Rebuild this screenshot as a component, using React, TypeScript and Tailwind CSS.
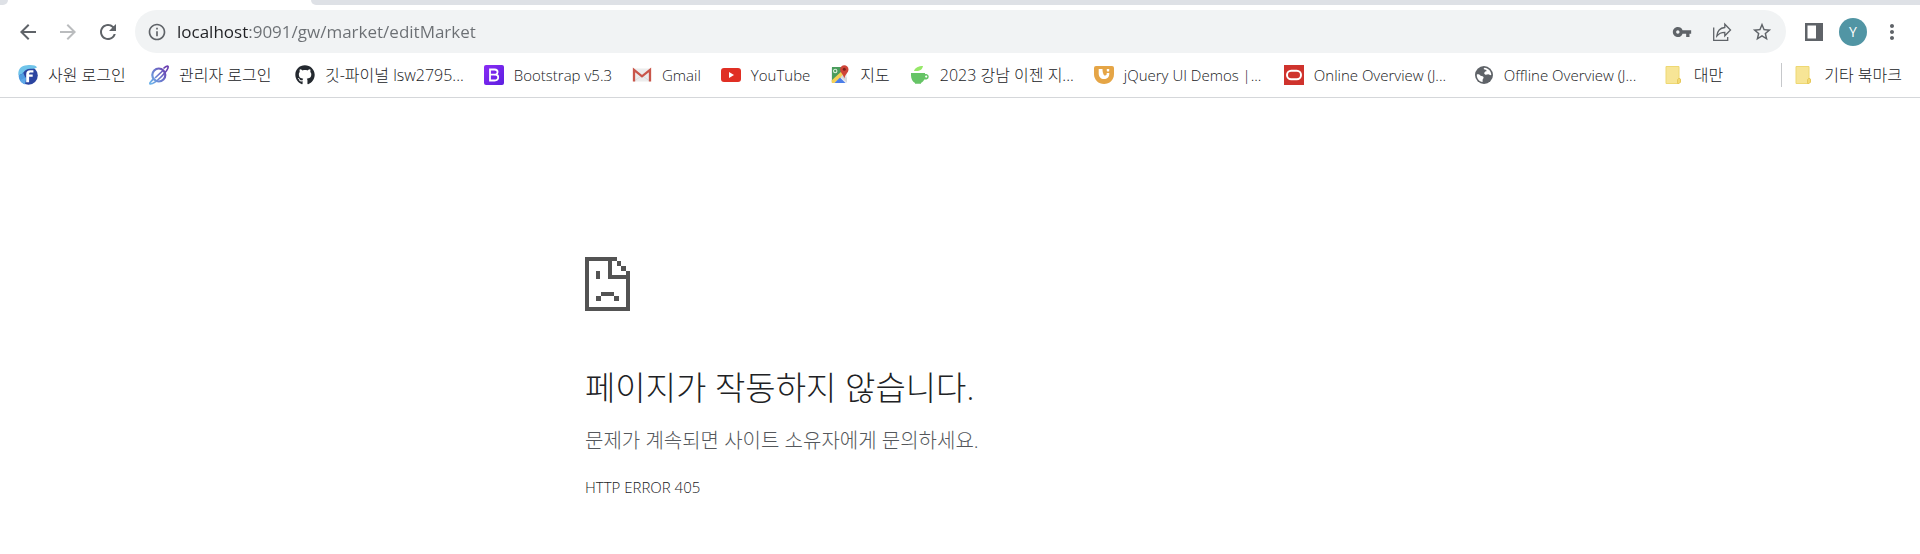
import type { ReactNode } from "react";
import { MdArrowBack, MdArrowForward, MdRefresh, MdInfoOutline, MdVpnKey, MdStarBorder, MdMoreVert } from "react-icons/md";
import { FaGithub } from "react-icons/fa";

const FinalIcon = () => (
  <svg viewBox="0 0 20 20" className="size-5">
    <circle cx="10.5" cy="10.5" r="9.3" fill="#2b44a0" />
    <path d="M.3 10C0 4 3 .3 9 .2c5-.4 9 0 10 2.3-3 2-6 .6-9 1.600C5 5.500 6 10 .3 10Z" fill="#6fc4ea" />
    <path d="M.6 10.200c2.500-.3 3.400-1.500 4.400-3L8 14l-1 5.200C3.200 18 .8 15 .6 10.200Z" fill="#4f9be0" />
    <path d="M7 19.200c-2-.5-4-2-5-4l6-3Z" fill="#5fa8e8" />
    <path d="M8.200 17.200V9.500c0-3 1.500-4.300 4-4.300h3.200v2.400h-2.600c-1.300 0-1.700.6-1.700 1.900h3.600v2.300h-3.600v5.400Z" fill="#fff" />
  </svg>
);

const PlanetIcon = () => (
  <svg viewBox="0 0 20 20" className="size-5" fill="none">
    <defs>
      <linearGradient id="planet" gradientUnits="userSpaceOnUse" x1="1" y1="17" x2="18" y2="5">
        <stop offset="0" stopColor="#6cb2ea" />
        <stop offset=".5" stopColor="#6a78cc" />
        <stop offset="1" stopColor="#6a3fb0" />
      </linearGradient>
    </defs>
    <circle cx="9.800" cy="10" r="6.500" stroke="url(#planet)" strokeWidth="2.200" />
    <path d="M5 13.500C.5 17.500.3 19 1.500 19c2.500 0 7-3.500 11-7.500S19.800 3 19 1.500C18.500.6 16 2 14.500 3.500" stroke="url(#planet)" strokeWidth="1.700" />
    <path d="m6 13 8-7.500" stroke="url(#planet)" strokeWidth="1.700" />
  </svg>
);

const BootstrapIcon = () => (
  <svg viewBox="0 0 20 20" className="size-5">
    <defs>
      <linearGradient id="boot" x1="0" y1="0" x2="1" y2="1">
        <stop offset="0" stopColor="#8a2cf5" />
        <stop offset="1" stopColor="#5c1fe0" />
      </linearGradient>
    </defs>
    <rect width="20" height="20" rx="2" fill="url(#boot)" />
    <path d="M6 4.500h4.600c1.900 0 3 1 3 2.600 0 1.200-.8 2-1.700 2.400 1.400.3 2.300 1.200 2.300 2.800 0 2-1.400 3.200-3.600 3.200H6Z" fill="none" stroke="#fff" strokeWidth="1.800" />
    <path d="M6 9.600h5.500" stroke="#fff" strokeWidth="1.700" />
  </svg>
);

const GmailIcon = () => (
  <svg viewBox="0 0 20 20" className="size-5">
    <rect x="1" y="3.500" width="18" height="13" rx="1" fill="#ececec" />
    <path d="m3 15.500 7-5 7 5" fill="none" stroke="#dcdcdc" />
    <path d="M2 16.500V4.800l8 6.500 8-6.500v11.700" fill="none" stroke="#c9564a" strokeWidth="2.300" />
  </svg>
);

const YouTubeIcon = () => (
  <svg viewBox="0 0 20 20" className="size-5">
    <rect y="3" width="20" height="14" rx="3" fill="#e02f24" />
    <path d="m8 7 5 3-5 3Z" fill="#fff" />
  </svg>
);

const MapsIcon = () => (
  <svg viewBox="0 0 20 20" className="size-5">
    <rect x="1" y="2" width="16" height="16" rx="1.500" fill="#eceff1" />
    <path d="M2 2h11v5L2 17Z" fill="#4a9c5c" />
    <path d="M1.500 15.500 12 6l3 3L4.500 18H2Z" fill="#f5d054" />
    <path d="m4.500 18 5.500-5.500 5.500 5.500Z" fill="#4b7de8" />
    <path d="m10.500 12 3-2.500 3.500 3.500v4.500Z" fill="#d6d9dd" />
    <circle cx="5.200" cy="6" r="1.700" fill="none" stroke="#d8efdc" strokeWidth="1.100" />
    <path d="M14.300.2a4.200 4.200 0 0 1 4.200 4.200c0 3.200-3.300 4.600-4.200 9-.9-4.400-4.200-5.800-4.200-9A4.200 4.200 0 0 1 14.300.2Z" fill="#cf4438" />
    <circle cx="14.300" cy="4.300" r="1.500" fill="#7c2018" />
  </svg>
);

const CupIcon = () => (
  <svg viewBox="0 0 20 20" className="size-5">
    <path d="M4 6C5 2.500 8.500 1 13 1c-.5 3.500-3 5.500-9 5Z" fill="#96e868" />
    <path d="M1 8h14v1h1.500a2.800 2.800 0 0 1 0 5.500h-2.200c-.7 1.500-1.800 2.600-3.300 3.500v.800H5V18c-2.500-1.500-4-4.300-4-7.500Z" fill="#66c466" />
    <circle cx="16.200" cy="11.600" r="1.100" fill="#fff" />
  </svg>
);

const JQueryIcon = () => (
  <svg viewBox="0 0 20 20" className="size-5">
    <path d="M2 1h16a2 2 0 0 1 2 2v6c0 6-4.500 10-10 10S0 15 0 9V3a2 2 0 0 1 2-2Z" fill="#e5a546" />
    <path d="M4.700 4v4.500c0 3.500 2.200 5.600 5.300 5.600s5.300-2 5.300-5.300V8h-2.600v.8c0 1.100-.6 1.700-1.500 1.700s-1.400-.5-1.800-1.500C8.900 7.800 8.500 6.500 8.500 4Z" fill="#fff" />
    <rect x="12.800" y="4" width="2.400" height="2.400" rx=".6" fill="#fff" />
  </svg>
);

const OracleIcon = () => (
  <svg viewBox="0 0 20 20" className="size-5">
    <rect width="20" height="20" fill="#cf332d" />
    <rect x="3" y="5.800" width="14" height="8.500" rx="4.200" fill="none" stroke="#fff" strokeWidth="2" />
  </svg>
);

const GlobeIcon = () => (
  <svg viewBox="0 0 20 20" className="size-5">
    <circle cx="10" cy="10" r="9" fill="#5f6368" />
    <path d="M2.800 9.500c1.500-.4 2.700.2 3.800 1.200 1.200.2 3 .3 3 1.800 0 1-1 1.400-1 2.400v2.200C5 16.500 2.600 13.500 2.800 9.500Z" fill="#fff" />
    <path d="M10.500 2.700c3.800.3 6.700 3.300 6.800 7.300-1.200.6-1.900-.8-3-.8-1.300 0-2 .8-3.200.3-1-.5-1.200-1.800-.3-2.600.9-.7 1.800-.2 1.700-1.400-.1-1-1.700-.5-2.500-1.200-.5-.5-.2-1.300.5-1.600Z" fill="#fff" />
  </svg>
);

const FolderIcon = () => (
  <svg viewBox="0 0 20 20" className="size-5">
    <path d="M2 1.500h13v11.700l1.500 1V17L15 18.500H2Z" fill="#f7e596" stroke="#eed873" />
    <path d="M13.500 18.500v-4l1.500-1.300 1.500 1V17L15 18.500Z" fill="#f3da72" stroke="#e3c455" strokeWidth=".8" />
  </svg>
);

const ShareIcon = () => (
  <svg viewBox="0 0 20 20" className="size-5" fill="none" stroke="#5f6368" strokeWidth="1.300">
    <path d="M1.700 5.500v12.800h14V15" />
    <path d="M12.800 2.200v3.300C8 6 5.300 9 4.800 14c2-2.500 4.500-3.600 8-3.600v3.400L18.500 8Z" />
  </svg>
);

const SidePanelIcon = () => (
  <svg viewBox="0 0 20 20" className="size-5">
    <path fillRule="evenodd" d="M1 1h18v18H1Zm2.500 2.500v13H12v-13Z" fill="#5f6368" />
  </svg>
);

const SadPage = () => (
  <svg viewBox="0 0 45 54" className="h-[54px] w-[45px]" fill="#535353">
    <path d="M0 0h32v4H27v14h18v4H23V4H4v46h37V22h4v32H0Z" />
    <path d="M32 4h4v5h-4ZM36 9h5v5h-5ZM41 14h4v8h-4ZM11 14h4v8h-4ZM16 35h13v4H16ZM11 39h5v5h-5ZM29 39h5v5h-5Z" />
  </svg>
);

type Bookmark = { label: string; icon: ReactNode; width?: string };

const bookmarks: Bookmark[] = [
  { label: "사원 로그인", icon: <FinalIcon />, width: "min-w-[81px]" },
  { label: "관리자 로그인", icon: <PlanetIcon />, width: "min-w-24" },
  { label: "깃-파이널 lsw2795...", icon: <FaGithub className="size-5 text-[#24292f]" /> },
  { label: "Bootstrap v5.3", icon: <BootstrapIcon /> },
  { label: "Gmail", icon: <GmailIcon /> },
  { label: "YouTube", icon: <YouTubeIcon /> },
  { label: "지도", icon: <MapsIcon /> },
  { label: "2023 강남 이젠 지...", icon: <CupIcon /> },
  { label: "jQuery UI Demos |...", icon: <JQueryIcon />, width: "min-w-[140px]" },
  { label: "Online Overview (J...", icon: <OracleIcon />, width: "min-w-[140px]" },
  { label: "Offline Overview (J...", icon: <GlobeIcon />, width: "min-w-[140px]" },
];

const hasHangul = (text: string) => /[\uac00-\ud7a3]/.test(text);

const Label = ({ text, width = "" }: { text: string; width?: string }) => (
  <span className={`${hasHangul(text) ? "text-[16px]" : "text-[15px]"} leading-6 ${width}`}>{text}</span>
);

const BookmarkLink = ({ label, icon, width }: Bookmark) => (
  <a href="#" className="flex shrink-0 items-center gap-2.5 whitespace-nowrap">
    {icon}
    <Label text={label} width={width} />
  </a>
);

const FolderButton = ({ label }: { label: string }) => (
  <button type="button" className="flex shrink-0 items-center gap-2.5 whitespace-nowrap">
    <FolderIcon />
    <Label text={label} />
  </button>
);

const IconButton = ({ label, children }: { label: string; children: ReactNode }) => (
  <button type="button" aria-label={label} className="flex size-10 shrink-0 items-center justify-center text-[#5f6368]">
    {children}
  </button>
);

export default function App() {
  return (
    <div className="bg-white font-['Open_Sans','Noto_Sans_CJK_KR',sans-serif] text-[#3c4043]">
      <div className="flex h-[5px] bg-white">
        <div className="w-2 rounded-br-lg bg-[#dee1e6]" />
        <div className="w-[303px]" />
        <div className="flex-1 rounded-bl-lg bg-[#dee1e6]" />
      </div>

      <header className="border-b border-[#d5d7da]">
        <div className="flex items-center px-2 pt-[5px]">
          <nav className="flex items-center" aria-label="탐색">
            <IconButton label="뒤로">
              <MdArrowBack className="size-6" />
            </IconButton>
            <button type="button" aria-label="앞으로" disabled className="flex size-10 items-center justify-center text-[#babcbe]">
              <MdArrowForward className="size-6" />
            </button>
            <IconButton label="새로고침">
              <MdRefresh className="size-6" />
            </IconButton>
          </nav>

          <div className="ml-[7px] flex h-[43px] flex-1 items-center rounded-full bg-[#f1f3f4] pr-1 pl-3">
            <MdInfoOutline className="size-5 shrink-0 text-[#5f6368]" />
            <input
              type="text"
              aria-label="주소창"
              defaultValue="localhost:9091/gw/market/editMarket"
              className="ml-2.5 min-w-0 flex-1 bg-[linear-gradient(90deg,#202124_71px,#6b6f73_71px)] bg-clip-text text-[17px] text-transparent outline-none"
            />
            <IconButton label="비밀번호 관리">
              <MdVpnKey className="size-5" />
            </IconButton>
            <IconButton label="공유">
              <ShareIcon />
            </IconButton>
            <IconButton label="북마크에 추가">
              <MdStarBorder className="size-[22px]" />
            </IconButton>
          </div>

          <div className="ml-2 flex items-center">
            <IconButton label="측면 패널">
              <SidePanelIcon />
            </IconButton>
            <button type="button" className="mx-[5px] flex size-7 items-center justify-center rounded-full bg-[#5195a4] text-sm text-white">
              Y
            </button>
            <IconButton label="메뉴">
              <MdMoreVert className="size-6" />
            </IconButton>
          </div>
        </div>

        <div className="flex h-11 items-center px-[18px] pb-px font-light text-[#202124]">
          <nav className="flex min-w-0 flex-1 items-center gap-5" aria-label="북마크">
            {bookmarks.map((b) => (
              <BookmarkLink key={b.label} {...b} />
            ))}
            <FolderButton label="대만" />
          </nav>
          <div className="border-l border-[#c6c8cb] pl-3">
            <FolderButton label="기타 북마크" />
          </div>
        </div>
      </header>

      <main className="mx-auto w-[750px] max-w-full pt-[159px] pb-5">
        <SadPage />
        <h1 className="mt-[53px] text-[33px] leading-[48px] font-light text-[#202124]">페이지가 작동하지 않습니다.</h1>
        <p className="mt-[15px] text-[20px] leading-7 font-light text-[#54575b]">문제가 계속되면 사이트 소유자에게 문의하세요.</p>
        <p className="mt-5 text-[15px] leading-6 font-light text-[#202124]">HTTP ERROR 405</p>
      </main>
    </div>
  );
}
